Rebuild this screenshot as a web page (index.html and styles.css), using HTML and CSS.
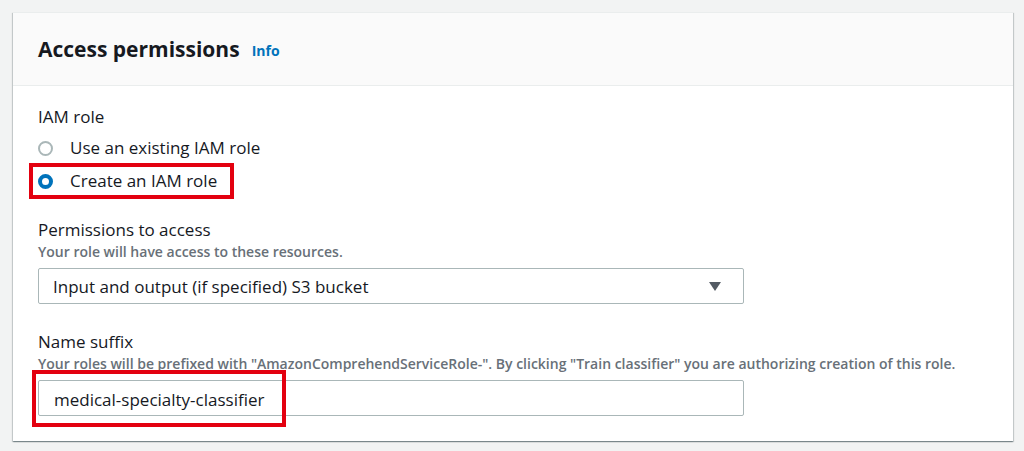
FILE: index.html
```html
<!DOCTYPE html>
<html lang="en">
<head>
<meta charset="utf-8">
<title>Access permissions</title>
<link rel="stylesheet" href="styles.css">
</head>
<body>
<section class="card">
  <header class="card-header">
    <h2 class="card-title">Access permissions</h2>
    <a class="info-link" href="#">Info</a>
  </header>
  <div class="card-body">
    <div class="field">
      <div class="field-label">IAM role</div>
      <div class="radio-group">
        <label class="radio-option">
          <span class="radio"></span>
          <span class="radio-text">Use an existing IAM role</span>
        </label>
        <label class="radio-option highlight">
          <span class="radio checked"></span>
          <span class="radio-text">Create an IAM role</span>
        </label>
      </div>
    </div>

    <div class="field">
      <div class="field-label">Permissions to access</div>
      <div class="field-desc">Your role will have access to these resources.</div>
      <div class="select">
        <span class="select-value">Input and output (if specified) S3 bucket</span>
        <span class="caret"></span>
      </div>
    </div>

    <div class="field">
      <div class="field-label">Name suffix</div>
      <div class="field-desc">Your roles will be prefixed with "AmazonComprehendServiceRole-". By clicking "Train classifier" you are authorizing creation of this role.</div>
      <div class="input">
        <span class="input-value highlight-box">medical-specialty-classifier</span>
      </div>
    </div>
  </div>
</section>
</body>
</html>
```

FILE: styles.css
```css
* { box-sizing: border-box; }

html, body {
  margin: 0;
  padding: 0;
}

body {
  background: #f2f3f3;
  font-family: "Open Sans", "Noto Sans", sans-serif;
  color: #16191f;
  padding: 12px 11px 10px 13px;
}

.card {
  width: 1000px;
  background: #ffffff;
  box-shadow: 0 1px 1px 0 rgba(0, 28, 36, 0.3), 1px 1px 1px 0 rgba(0, 28, 36, 0.15), -1px 1px 1px 0 rgba(0, 28, 36, 0.15);
  border-top: 1px solid #eaeded;
}

.card-header {
  background: #fafafa;
  border-bottom: 1px solid #eaeded;
  height: 73px;
  padding: 0 25px;
  display: flex;
  align-items: center;
  gap: 12px;
}

.card-title {
  margin: 0;
  font-size: 21px;
  font-weight: 700;
  letter-spacing: 0;
  color: #16191f;
}

.info-link {
  color: #0073bb;
  font-size: 14px;
  font-weight: 700;
  text-decoration: none;
  margin-top: 3px;
}

.card-body {
  padding: 20px 25px 25px;
  display: flex;
  flex-direction: column;
  gap: 27px;
}

.field {
  display: flex;
  flex-direction: column;
}

.field-label {
  font-size: 17px;
  line-height: 22px;
  color: #16191f;
}

.field-desc {
  font-size: 14px;
  font-weight: 600;
  line-height: 18px;
  color: #687078;
  margin-top: 2px;
}

.radio-group {
  display: flex;
  flex-direction: column;
  gap: 11px;
  margin-top: 9px;
}

.radio-option {
  display: flex;
  align-items: center;
  gap: 17px;
  font-size: 17px;
  line-height: 22px;
  width: max-content;
}

.radio {
  width: 15px;
  height: 15px;
  border-radius: 50%;
  border: 2px solid #aab7b8;
  background: #fff;
  flex: none;
}

.radio.checked {
  border: 4px solid #0073bb;
  background: #fff;
}

.highlight {
  outline: 4px solid #e3000f;
  outline-offset: 0;
  padding: 3px 13px 3px 5px;
  margin: -3px 0 -3px -5px;
}

.select,
.input {
  width: 706px;
  height: 36px;
  border: 1px solid #aab7b8;
  border-radius: 2px;
  margin-top: 7px;
  display: flex;
  align-items: center;
  padding: 0 22px 0 14px;
  font-size: 17px;
  color: #16191f;
  background: #fff;
}

.select {
  justify-content: space-between;
}

.caret {
  width: 0;
  height: 0;
  border-left: 6px solid transparent;
  border-right: 6px solid transparent;
  border-top: 9px solid #545b64;
}

.input {
  position: relative;
}

.highlight-box {
  position: absolute;
  left: -7px;
  top: -11px;
  width: 254px;
  height: 57px;
  border: 4px solid #e3000f;
  display: flex;
  align-items: center;
  padding-left: 18px;
  padding-top: 1px;
}
```
